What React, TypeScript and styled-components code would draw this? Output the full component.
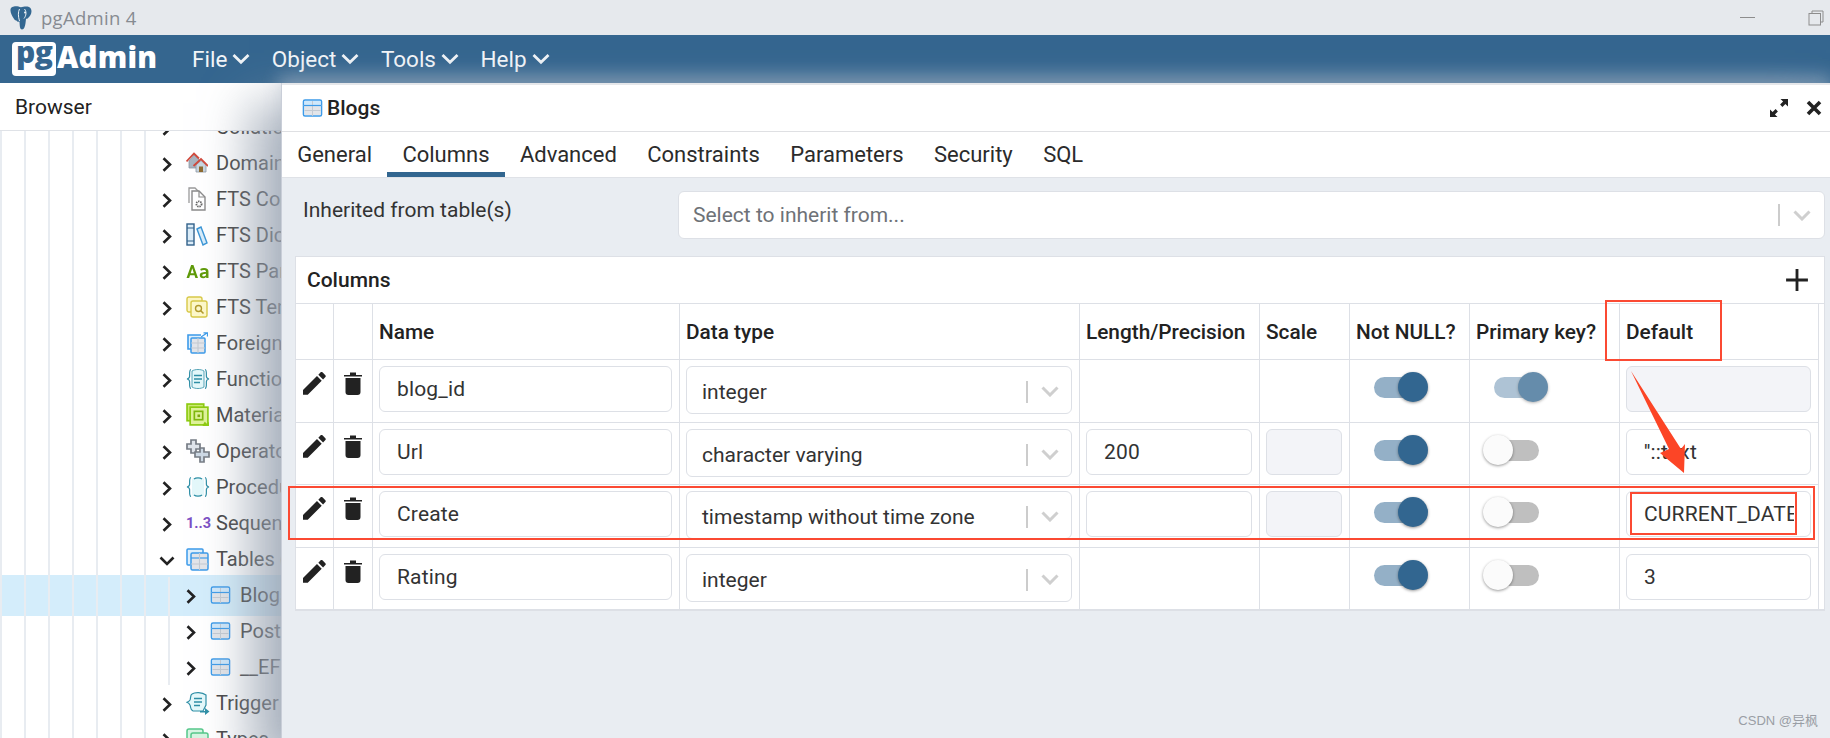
import React from 'react';
import styled, { createGlobalStyle } from 'styled-components';

const GlobalStyle = createGlobalStyle`
  html, body {
    margin: 0;
    padding: 0;
    background: #fff;
  }
  * {
    box-sizing: border-box;
  }
`;

const Chevron = ({ open }: { open?: boolean }) =>
  open ? (
    <svg width="16" height="10" viewBox="0 0 16 10">
      <path d="M1.5 1.5 L8 8 L14.5 1.5" fill="none" stroke="#222" strokeWidth="2.6" />
    </svg>
  ) : (
    <svg width="10" height="15" viewBox="0 0 10 15">
      <path d="M1.5 1.2 L8 7.5 L1.5 13.8" fill="none" stroke="#222" strokeWidth="2.6" />
    </svg>
  );

const NavChevron = () => (
  <svg width="18" height="12" viewBox="0 0 18 12">
    <path d="M1.5 2 L9 9.3 L16.5 2" fill="none" stroke="#fff" strokeWidth="2.8" opacity="0.92" />
  </svg>
);

const SelectChevron = () => (
  <svg width="18" height="11" viewBox="0 0 18 11">
    <path d="M1.5 1.5 L9 9 L16.5 1.5" fill="none" stroke="#cfcfcf" strokeWidth="3" />
  </svg>
);

const TableGlyph = () => (
  <svg width="21" height="18" viewBox="0 0 20 18">
    <rect x="1" y="1" width="18" height="16" rx="1.5" fill="#fff" stroke="#3d9be9" strokeWidth="1.6" />
    <rect x="2" y="2" width="16" height="4" fill="#cfe8fb" />
    <rect x="2" y="7" width="16" height="9" fill="#e3e5e9" />
    <path d="M1 6.5 H19 M10 2 V17 M2 11.5 H18" stroke="#c4cad2" strokeWidth="1" />
    <path d="M1 6.5 H19" stroke="#3d9be9" strokeWidth="1.2" />
  </svg>
);

const CollationIcon = () => (
  <svg width="22" height="24" viewBox="0 0 22 24">
    <path d="M1 2 H9 V13 H1 Z" fill="#fff" stroke="#ee6a6a" strokeWidth="2.4" />
    <path d="M12 5 H21 L16.5 11 Z" fill="#ee6a6a" />
  </svg>
);

const DomainIcon = () => (
  <svg width="22" height="22" viewBox="0 0 22 22">
    <path d="M3 9 L8 3 L14 9 V16 H3 Z" fill="#a9b4bf" stroke="#8d97a3" strokeWidth="0.8" />
    <path d="M0.5 9.5 L8 1.5 L13 6.5" fill="none" stroke="#d14a3c" strokeWidth="1.8" />
    <path d="M10 13 L15 8.5 L20 13 V20 H10 Z" fill="#c9d6e0" stroke="#8d97a3" strokeWidth="0.8" />
    <path d="M7.5 14 L15 7 L22 14" fill="none" stroke="#d14a3c" strokeWidth="1.8" />
    <rect x="13" y="14.5" width="4" height="5.5" fill="#8d6a2f" />
  </svg>
);

const ConfigIcon = () => (
  <svg width="22" height="26" viewBox="0 0 22 26">
    <path d="M3 17 V2 H9 L13 6" fill="#fff" stroke="#9b9b9b" strokeWidth="1.3" />
    <path d="M6 24 V5 H13 L19 11 V24 Z" fill="#fff" stroke="#8b8b8b" strokeWidth="1.4" />
    <path d="M13 5 V11 H19" fill="none" stroke="#8b8b8b" strokeWidth="1.2" />
    <circle cx="13" cy="18" r="2.6" fill="none" stroke="#666" strokeWidth="1.8" strokeDasharray="1.4 0.8" />
  </svg>
);

const DictIcon = () => (
  <svg width="22" height="24" viewBox="0 0 22 24">
    <rect x="1" y="1" width="7" height="21" fill="#dcedf8" stroke="#33628a" strokeWidth="1.4" />
    <path d="M1 5 H8 M1 18 H8" stroke="#33628a" strokeWidth="1" />
    <path d="M11 6 L15 4 L21 20 L17 22 Z" fill="#d8ecf9" stroke="#3b96d6" strokeWidth="1.4" />
  </svg>
);

const ParserIcon = () => (
  <svg width="24" height="18" viewBox="0 0 22 16">
    <path d="M0.5 14.5 L4.7 2.5 H6.8 L11 14.5 H8.6 L7.8 12 H3.7 L2.9 14.5 Z M4.3 10 H7.2 L5.75 5.4 Z" fill="#5f9a08" />
    <path d="M16.5 5.2 C19.4 5.2 20.6 6.4 20.6 8.5 V14.5 H18.6 L18.4 13.5 C17.7 14.3 16.8 14.7 15.7 14.7 C13.9 14.7 12.6 13.6 12.6 12 C12.6 10 14.4 9.1 18.3 9 V8.6 C18.3 7.6 17.7 7 16.4 7 C15.4 7 14.5 7.3 13.7 7.8 L13 6.2 C14 5.6 15.2 5.2 16.5 5.2 Z M18.3 10.5 C15.8 10.6 14.9 11.1 14.9 11.9 C14.9 12.6 15.4 13 16.2 13 C17.2 13 18.3 12.4 18.3 11.5 Z" fill="#5f9a08" />
  </svg>
);

const TemplateIcon = () => (
  <svg width="22" height="22" viewBox="0 0 22 22">
    <rect x="1" y="1" width="15" height="15" rx="2" fill="#fdf6c4" stroke="#d8c948" strokeWidth="1.4" />
    <rect x="5" y="5" width="16" height="16" rx="2" fill="#fdf8c9" stroke="#d8c948" strokeWidth="1.4" />
    <circle cx="12.5" cy="12.5" r="3" fill="none" stroke="#b29a2c" strokeWidth="1.4" />
    <path d="M14.8 14.8 L17.5 17.5" stroke="#b29a2c" strokeWidth="1.6" />
  </svg>
);

const ForeignIcon = () => (
  <svg width="22" height="22" viewBox="0 0 22 22">
    <path d="M15 3 H2 V17 H5" fill="#dff0fc" stroke="#3d9be9" strokeWidth="1.6" />
    <rect x="5" y="6" width="14" height="15" rx="1" fill="#e3e5e9" stroke="#3d9be9" strokeWidth="1.5" />
    <path d="M5 11 H19 M12 6 V21 M5 16 H19" stroke="#c4cad2" strokeWidth="1.1" />
    <path d="M15 5 L21 1 M17.5 0.8 H21.5 V4.5" fill="none" stroke="#3d9be9" strokeWidth="1.3" />
  </svg>
);

const FunctionIcon = () => (
  <svg width="24" height="22" viewBox="0 0 24 22">
    <path d="M6 3 C9 1 15 1 18 3 V19 C15 21 9 21 6 19 Z" fill="#e4f8fa" stroke="#2f8fa6" strokeWidth="0.8" />
    <path d="M5 1.5 C2.8 2 4 7 3.5 9 C3.2 10.2 2 10.8 1 11 C2 11.2 3.2 11.8 3.5 13 C4 15 2.8 20 5 20.5" fill="none" stroke="#2f8fa6" strokeWidth="1.2" />
    <path d="M19 1.5 C21.2 2 20 7 20.5 9 C20.8 10.2 22 10.8 23 11 C22 11.2 20.8 11.8 20.5 13 C20 15 21.2 20 19 20.5" fill="none" stroke="#2f8fa6" strokeWidth="1.2" />
    <path d="M8 7.5 H16 M8 11 H16 M8 14.5 H14" stroke="#2f8fa6" strokeWidth="1.5" />
  </svg>
);

const MaterialIcon = () => (
  <svg width="24" height="24" viewBox="0 0 23 23">
    <rect x="1" y="1" width="16" height="16" fill="#cdea72" stroke="#8dcb10" strokeWidth="1.6" />
    <rect x="4" y="4" width="17" height="17" fill="#dff29a" stroke="#8dcb10" strokeWidth="1.6" />
    <rect x="8" y="8" width="8" height="8" fill="none" stroke="#7fb80d" strokeWidth="1.6" />
    <rect x="11" y="11" width="2.5" height="2.5" fill="#7fa80d" />
    <path d="M16 21 L18 18 L20 20 L22 18 V22 H16 Z" fill="#8dcb10" />
  </svg>
);

const OperatorIcon = () => (
  <svg width="24" height="24" viewBox="0 0 24 24">
    <path d="M5 1 H10 V5 H14 V10 H10 V14 H5 V10 H1 V5 H5 Z" fill="#dfe4ea" stroke="#777d85" strokeWidth="1.7" />
    <path d="M14 9 H18 V13 H23 V18 H18 V23 H14 V18 H9 V13 H14 Z" fill="#cdd9e5" stroke="#777d85" strokeWidth="1.7" />
  </svg>
);

const ProcedureIcon = () => (
  <svg width="24" height="22" viewBox="0 0 24 22">
    <path d="M6 3 C9 1 15 1 18 3 V19 C15 21 9 21 6 19 Z" fill="#e4f8fa" />
    <path d="M5 1.5 C2.8 2 4 7 3.5 9 C3.2 10.2 2 10.8 1 11 C2 11.2 3.2 11.8 3.5 13 C4 15 2.8 20 5 20.5" fill="none" stroke="#2f8fa6" strokeWidth="1.2" />
    <path d="M19 1.5 C21.2 2 20 7 20.5 9 C20.8 10.2 22 10.8 23 11 C22 11.2 20.8 11.8 20.5 13 C20 15 21.2 20 19 20.5" fill="none" stroke="#2f8fa6" strokeWidth="1.2" />
    <path d="M8 3 C10 1.5 14 1.5 16 3" fill="none" stroke="#2f8fa6" strokeWidth="1.2" />
    <path d="M8 19 C10 20.5 14 20.5 16 19" fill="none" stroke="#2f8fa6" strokeWidth="1.2" />
  </svg>
);

const TablesIcon = () => (
  <svg width="23" height="23" viewBox="0 0 23 23">
    <path d="M4 17 H2 Q1 17 1 16 V2 Q1 1 2 1 H16 Q17 1 17 2 V5" fill="#dff0fc" stroke="#3d9be9" strokeWidth="1.5" />
    <rect x="5" y="5" width="17" height="17" rx="1.5" fill="#e3e5e9" stroke="#3d9be9" strokeWidth="1.5" />
    <path d="M5 10 H22" stroke="#3d9be9" strokeWidth="1.2" />
    <path d="M13.5 5 V22 M5 16 H22" stroke="#c4cad2" strokeWidth="1.1" />
  </svg>
);

const TriggerIcon = () => (
  <svg width="24" height="24" viewBox="0 0 24 24">
    <path d="M6 3 C4 4 5 7 4 9 C3.4 10 2 11 1 11.3 C2 11.7 3.4 12.7 4 14 C5 16 4 19 7 20 H17 L20 14 V4 C16 1 9 1 6 3 Z" fill="#e4f8fa" stroke="#2f8fa6" strokeWidth="1.2" />
    <path d="M8 7.5 H16 M8 11 H16 M8 14.5 H14" stroke="#2f8fa6" strokeWidth="1.5" />
    <path d="M14 20 H19 V17 L23.5 20.5 L19 24 V21.5 H14 Z" fill="#2f8fa6" />
  </svg>
);

const TypesIcon = () => (
  <svg width="23" height="22" viewBox="0 0 23 22">
    <rect x="1" y="1" width="16" height="14" rx="2" fill="#d6f5e2" stroke="#56c88a" strokeWidth="1.5" />
    <rect x="5" y="5" width="17" height="15" rx="2" fill="#d6f5e2" stroke="#56c88a" strokeWidth="1.5" />
  </svg>
);

const SequenceIcon = () => <SeqText>1..3</SeqText>;

const PencilIcon = () => (
  <svg width="23" height="23" viewBox="3 3 18.2 18.2">
    <path
      fill="#222"
      d="M3 17.25V21h3.75L17.81 9.94l-3.75-3.75L3 17.25zM20.71 7.04c.39-.39.39-1.02 0-1.41l-2.34-2.34c-.39-.39-1.02-.39-1.41 0l-1.83 1.83 3.75 3.75 1.83-1.83z"
    />
  </svg>
);

const TrashIcon = () => (
  <svg width="18" height="23" viewBox="0 0 18 23">
    <path d="M0 3 H18 V4.6 H0 Z M6 0.6 H12 V3 H6 Z" fill="#222" />
    <path d="M1.5 6 H16.5 V20 Q16.5 23 13.5 23 H4.5 Q1.5 23 1.5 20 Z" fill="#222" />
  </svg>
);

const ElephantIcon = () => (
  <svg width="22" height="24" viewBox="0 0 22 24">
    <path
      fill="#336791"
      d="M4 0.5 C7 0 9 1 11 1.2 C13 1 16 0 19 1 C22 2.5 22 6 20.5 9 C19.5 11 18 12 17.6 12.6 C16.8 13 16.4 12.8 16 13 C15.6 16 15.5 19 14.4 21.5 C13.6 23.6 11.4 24 10.4 22.4 C9.6 21 9.8 18 9.4 15.6 C8 16 7 15.4 6.4 14.4 C5.4 14.6 4.6 14 3.4 12 C1.6 9 -0.6 4.5 1 2 C1.6 1.1 2.8 0.7 4 0.5 Z"
    />
    <path d="M9.5 3 C8 6 8 10 9.5 15 M14.5 3 C17 6 16 10 14 12.5" fill="none" stroke="#fff" strokeWidth="0.9" />
    <circle cx="15" cy="6.5" r="0.9" fill="#fff" />
  </svg>
);

const ExpandIcon = () => (
  <svg width="20" height="20" viewBox="0 0 20 20">
    <path d="M11.5 1 H19 V8.5 L16.4 5.9 L13.4 8.9 L11.1 6.6 L14.1 3.6 Z" fill="#222" />
    <path d="M8.5 19 H1 V11.5 L3.6 14.1 L6.6 11.1 L8.9 13.4 L5.9 16.4 Z" fill="#222" />
  </svg>
);

const CloseIcon = () => (
  <svg width="16" height="16" viewBox="0 0 16 16">
    <path d="M2 2 L14 14 M14 2 L2 14" stroke="#222" strokeWidth="3.6" />
  </svg>
);

const PlusIcon = () => (
  <svg width="24" height="24" viewBox="0 0 22 22">
    <path d="M11 1 V21 M1 11 H21" stroke="#222" strokeWidth="2.6" />
  </svg>
);

const Annotations = () => (
  <AnnotationLayer viewBox="0 0 1830 738">
    <g fill="none" stroke="#fb4a33" strokeWidth="2">
      <rect x="1606" y="301" width="115" height="59" />
      <rect x="289" y="487" width="1525" height="52" />
      <rect x="1631" y="493" width="165" height="41" />
    </g>
    <polygon
      fill="#fc4526"
      points="1631,371 1681,449 1685,444 1684,473 1660,453 1669,449"
    />
  </AnnotationLayer>
);

const treeItems = [
  { label: 'Collations', icon: <CollationIcon /> },
  { label: 'Domains', icon: <DomainIcon /> },
  { label: 'FTS Configurations', icon: <ConfigIcon /> },
  { label: 'FTS Dictionaries', icon: <DictIcon /> },
  { label: 'FTS Parsers', icon: <ParserIcon /> },
  { label: 'FTS Templates', icon: <TemplateIcon /> },
  { label: 'Foreign Tables', icon: <ForeignIcon /> },
  { label: 'Functions', icon: <FunctionIcon /> },
  { label: 'Materialized Views', icon: <MaterialIcon /> },
  { label: 'Operators', icon: <OperatorIcon /> },
  { label: 'Procedures', icon: <ProcedureIcon /> },
  { label: 'Sequences', icon: <SequenceIcon /> },
];

const childTables = ['Blogs', 'Posts', '__EFMigrationsHistory'];

const tabs = ['General', 'Columns', 'Advanced', 'Constraints', 'Parameters', 'Security', 'SQL'];

const headers = ['', '', 'Name', 'Data type', 'Length/Precision', 'Scale', 'Not NULL?', 'Primary key?', 'Default'];

const columns = [
  { name: 'blog_id', type: 'integer', length: null, scale: null, pk: true, def: '', defOff: true, height: 63 },
  { name: 'Url', type: 'character varying', length: '200', scale: '', pk: false, def: "''::text", defOff: false, height: 62 },
  { name: 'Create', type: 'timestamp without time zone', length: '', scale: '', pk: false, def: 'CURRENT_DATE', defOff: false, height: 63 },
  { name: 'Rating', type: 'integer', length: null, scale: null, pk: false, def: '3', defOff: false, height: 62 },
];

const App = () => {
  return (
    <Page>
      <GlobalStyle />
      <TitleBar>
        <ElephantIcon />
        <AppName>pgAdmin 4</AppName>
        <WindowButtons>
          <MinimizeLine />
          <svg width="16" height="16" viewBox="0 0 16 16">
            <path d="M4 3.5 V1 H15 V12 H12.5" fill="none" stroke="#8d8d8d" strokeWidth="1" />
            <rect x="1" y="3.5" width="11.5" height="11.5" fill="none" stroke="#8d8d8d" strokeWidth="1" />
          </svg>
        </WindowButtons>
      </TitleBar>
      <NavBar>
        <Logo>
          <LogoBadge>pg</LogoBadge>
          <LogoText>Admin</LogoText>
        </Logo>
        <Menu>
          {['File', 'Object', 'Tools', 'Help'].map((m) => (
            <MenuItem key={m}>
              {m}
              <NavChevron />
            </MenuItem>
          ))}
        </Menu>
      </NavBar>
      <Main>
        <Browser>
          <BrowserHeader>Browser</BrowserHeader>
          <Tree>
            <TreeInner>
              {treeItems.map((item) => (
                <TreeRow key={item.label} $depth={0}>
                  <Toggle><Chevron /></Toggle>
                  <TreeIcon>{item.icon}</TreeIcon>
                  <TreeLabel>{item.label}</TreeLabel>
                </TreeRow>
              ))}
              <TreeRow $depth={0}>
                <Toggle $open><Chevron open /></Toggle>
                <TreeIcon><TablesIcon /></TreeIcon>
                <TreeLabel>Tables (3)</TreeLabel>
              </TreeRow>
              <TreeGroup>
                {childTables.map((t, i) => (
                  <TreeRow key={t} $depth={1} $selected={i === 0}>
                    <Toggle><Chevron /></Toggle>
                    <TreeIcon><TableGlyph /></TreeIcon>
                    <TreeLabel>{t}</TreeLabel>
                  </TreeRow>
                ))}
              </TreeGroup>
              <TreeRow $depth={0}>
                <Toggle><Chevron /></Toggle>
                <TreeIcon><TriggerIcon /></TreeIcon>
                <TreeLabel>Trigger Functions</TreeLabel>
              </TreeRow>
              <TreeRow $depth={0}>
                <Toggle><Chevron /></Toggle>
                <TreeIcon><TypesIcon /></TreeIcon>
                <TreeLabel>Types</TreeLabel>
              </TreeRow>
            </TreeInner>
          </Tree>
        </Browser>
        <Dialog>
          <DialogHeader>
            <TableGlyph />
            <DialogTitle>Blogs</DialogTitle>
            <DialogActions>
              <ExpandIcon />
              <CloseIcon />
            </DialogActions>
          </DialogHeader>
          <Tabs>
            {tabs.map((t) => (
              <Tab key={t} $active={t === 'Columns'}>{t}</Tab>
            ))}
          </Tabs>
          <DialogBody>
            <InheritRow>
              <InheritLabel>Inherited from table(s)</InheritLabel>
              <InheritSelect>
                <Placeholder>Select to inherit from...</Placeholder>
                <SelectSeparator />
                <SelectChevron />
              </InheritSelect>
            </InheritRow>
            <ColumnsPanel>
              <PanelHeader>
                <PanelTitle>Columns</PanelTitle>
                <PlusIcon />
              </PanelHeader>
              <GridRow $height={56}>
                {headers.map((h, i) => (
                  <HeadCell key={i}>{h}</HeadCell>
                ))}
              </GridRow>
              {columns.map((c) => (
                <GridRow key={c.name} $height={c.height}>
                  <IconCell><PencilIcon /></IconCell>
                  <IconCell $trash><TrashIcon /></IconCell>
                  <Cell><Field><FieldText>{c.name}</FieldText></Field></Cell>
                  <Cell>
                    <TypeSelect>
                      <TypeText>{c.type}</TypeText>
                      <SelectSeparator />
                      <SelectChevron />
                    </TypeSelect>
                  </Cell>
                  <Cell>
                    {c.length !== null && <Field><FieldText>{c.length}</FieldText></Field>}
                  </Cell>
                  <Cell>
                    {c.scale !== null && <Field $disabled />}
                  </Cell>
                  <SwitchCell>
                    <Switch $on><Thumb $on /></Switch>
                  </SwitchCell>
                  <SwitchCell>
                    <Switch $on={c.pk} $faded={c.pk}><Thumb $on={c.pk} /></Switch>
                  </SwitchCell>
                  <Cell>
                    <Field $disabled={c.defOff}>
                      <FieldText>{c.def}</FieldText>
                    </Field>
                  </Cell>
                </GridRow>
              ))}
            </ColumnsPanel>
          </DialogBody>
        </Dialog>
      </Main>
      <Annotations />
      <Watermark>CSDN @异枫</Watermark>
    </Page>
  );
};

export default App;

const Page = styled.div`
  position: relative;
  width: 1830px;
  height: 738px;
  overflow: hidden;
  display: flex;
  flex-direction: column;
  font-family: Roboto, "Liberation Sans", sans-serif;
  color: #222;
`;

const TitleBar = styled.div`
  position: relative;
  z-index: 3;
  height: 35px;
  flex: none;
  display: flex;
  align-items: center;
  padding: 0 6px 0 10px;
  background: #e6e9ed;
`;

const AppName = styled.span`
  margin-left: 9px;
  font-family: "Open Sans", sans-serif;
  font-size: 18.5px;
  color: #868b91;
  letter-spacing: 0.3px;
`;

const WindowButtons = styled.div`
  margin-left: auto;
  display: flex;
  align-items: center;
  gap: 53px;
`;

const MinimizeLine = styled.div`
  width: 15px;
  height: 1px;
  background: #8d8d8d;
`;

const NavBar = styled.div`
  height: 48px;
  flex: none;
  display: flex;
  align-items: center;
  padding-left: 12px;
  background: #35668f;
`;

const Logo = styled.div`
  display: flex;
  align-items: center;
  width: 180px;
`;

const LogoBadge = styled.div`
  width: 44px;
  height: 34px;
  padding-left: 4px;
  background: #fff;
  border-radius: 4px;
  color: #35668f;
  font-family: "Open Sans", sans-serif;
  font-weight: 800;
  font-size: 30px;
  line-height: 19px;
  letter-spacing: -0.5px;
`;

const LogoText = styled.div`
  padding: 0 0 5px 1px;
  color: #fff;
  font-family: "Open Sans", sans-serif;
  font-weight: 800;
  font-size: 29.5px;
  line-height: 29px;
  letter-spacing: 0.2px;
`;

const Menu = styled.div`
  display: flex;
  align-items: center;
  gap: 21.5px;
`;

const MenuItem = styled.div`
  display: flex;
  align-items: center;
  gap: 5px;
  color: #f2f5f8;
  font-size: 22.5px;
`;

const Main = styled.div`
  flex: 1;
  min-height: 0;
  display: flex;
`;

const Browser = styled.div`
  width: 281px;
  flex: none;
  display: flex;
  flex-direction: column;
  background: #fff;
  overflow: hidden;
`;

const BrowserHeader = styled.div`
  height: 48px;
  flex: none;
  display: flex;
  align-items: center;
  padding-left: 15px;
  font-size: 21px;
  white-space: nowrap;
  border-bottom: 1px solid #dfe2e7;
`;

const Tree = styled.div`
  position: relative;
  flex: 1;
  overflow: hidden;

  &::after {
    content: '';
    position: absolute;
    top: 0;
    bottom: 0;
    left: 0;
    width: 147px;
    background: linear-gradient(to right, #e8ecf1 2px, transparent 2px) 0 0 / 24px 100%;
    pointer-events: none;
  }
`;

const TreeInner = styled.div`
  margin-top: -22px;
`;

const TreeGroup = styled.div`
  position: relative;

  &::before {
    content: '';
    position: absolute;
    z-index: 1;
    left: 168px;
    top: 0;
    width: 2px;
    height: 108px;
    background: #e8ecf1;
  }
`;

const TreeRow = styled.div<{ $depth: number; $selected?: boolean }>`
  position: relative;
  height: 36px;
  display: flex;
  align-items: center;
  padding-left: ${(p) => 162 + p.$depth * 24}px;
  white-space: nowrap;
  background: ${(p) => (p.$selected ? '#d4edfb' : 'transparent')};
  box-shadow: ${(p) => (p.$selected ? '0 -2px 0 #d4edfb, 0 3px 0 #d4edfb' : 'none')};
`;

const Toggle = styled.div<{ $open?: boolean }>`
  width: ${(p) => (p.$open ? '27px' : '24px')};
  flex: none;
  display: flex;
  align-items: center;
  margin-left: ${(p) => (p.$open ? '-3px' : '0')};
  padding-top: 3px;
`;

const TreeIcon = styled.div`
  width: 30px;
  flex: none;
  display: flex;
  align-items: center;
`;

const TreeLabel = styled.span`
  font-size: 20px;
  color: #444;
`;

const SeqText = styled.span`
  font-size: 14.5px;
  font-weight: 700;
  color: #7b4fc4;
`;

const Dialog = styled.div`
  position: relative;
  z-index: 2;
  flex: 1;
  min-width: 0;
  display: flex;
  flex-direction: column;
  background: #e9edf2;
  border-left: 1px solid #c9ced8;
  box-shadow: -26px 26px 44px 6px rgba(150, 160, 175, 0.75), 0 -6px 16px 2px rgba(190, 200, 212, 0.45);
`;

const DialogHeader = styled.div`
  height: 49px;
  flex: none;
  display: flex;
  align-items: center;
  padding-left: 20px;
  background: #fff;
  border-top: 2px solid #e5e7ea;
  border-bottom: 1px solid #dfe0e3;
`;

const DialogTitle = styled.span`
  margin-left: 4px;
  font-size: 21px;
  font-weight: 500;
`;

const DialogActions = styled.div`
  margin-left: auto;
  display: flex;
  align-items: center;
  gap: 17px;
  padding-right: 8px;
`;

const Tabs = styled.div`
  height: 46px;
  flex: none;
  display: flex;
  background: #fff;
  border-bottom: 1px solid #dfe2e7;
`;

const Tab = styled.div<{ $active?: boolean }>`
  display: flex;
  align-items: center;
  padding: 0 15.2px;
  font-size: 22px;
  color: #2b2b2b;
  border-bottom: 5px solid ${(p) => (p.$active ? '#326690' : 'transparent')};
  border-top: 5px solid transparent;
`;

const DialogBody = styled.div`
  flex: 1;
  padding: 13px 5px 0 13px;
`;

const InheritRow = styled.div`
  display: flex;
  height: 48px;
`;

const InheritLabel = styled.div`
  width: 383px;
  padding: 7px 0 0 8px;
  font-size: 21px;
  color: #333;
`;

const InheritSelect = styled.div`
  flex: 1;
  display: flex;
  align-items: center;
  padding: 0 13px 0 14px;
  background: #fff;
  border: 1px solid #dde0e6;
  border-radius: 6px;
`;

const Placeholder = styled.span`
  font-size: 21px;
  color: #6e7277;
`;

const SelectSeparator = styled.div`
  margin-left: auto;
  margin-right: 13px;
  width: 2px;
  height: 22px;
  background: #cccccc;
`;

const ColumnsPanel = styled.div`
  margin-top: 17px;
  height: 355px;
  background: #fff;
  border: 1px solid #dde0e6;
  border-width: 1px 1px 2px 1px;
`;

const PanelHeader = styled.div`
  height: 47px;
  display: flex;
  align-items: center;
  justify-content: space-between;
  padding: 0 15px 0 11px;
  border-bottom: 1px solid #dde0e6;
`;

const PanelTitle = styled.span`
  font-size: 21px;
  font-weight: 500;
`;

const GridRow = styled.div<{ $height: number }>`
  display: grid;
  grid-template-columns: 38px 39px 307px 400px 180px 90px 120px 150px 199px;
  height: ${(p) => p.$height}px;
  width: 1523px;
  border-bottom: 1px solid #dde0e6;
`;

const Cell = styled.div`
  padding: 6px 7px 0 6px;
  border-right: 1px solid #dde0e6;
  min-width: 0;
`;

const HeadCell = styled.div`
  display: flex;
  align-items: center;
  padding: 1px 6px 0;
  font-size: 20.8px;
  font-weight: 500;
  white-space: nowrap;
  color: #222;
  border-right: 1px solid #dde0e6;
`;

const IconCell = styled.div<{ $trash?: boolean }>`
  display: flex;
  justify-content: ${(p) => (p.$trash ? 'center' : 'flex-start')};
  align-items: flex-start;
  padding: 12px 0 0 ${(p) => (p.$trash ? '0' : '7px')};
  border-right: 1px solid #dde0e6;
`;

const Field = styled.div<{ $disabled?: boolean }>`
  height: 46px;
  display: flex;
  align-items: center;
  padding: 0 16px 0 17px;
  background: ${(p) => (p.$disabled ? '#f3f4f8' : '#fff')};
  border: 1px solid #dde0e6;
  border-radius: 6px;
`;

const FieldText = styled.div`
  overflow: hidden;
  white-space: nowrap;
  font-size: 21px;
  letter-spacing: 0.15px;
  color: #333;
`;

const TypeSelect = styled.div`
  height: 48px;
  display: flex;
  align-items: center;
  padding: 3px 12px 0 15px;
  background: #fff;
  border: 1px solid #dde0e6;
  border-radius: 6px;
`;

const TypeText = styled.span`
  font-size: 21px;
  color: #333;
`;

const SwitchCell = styled.div`
  position: relative;
  border-right: 1px solid #dde0e6;
`;

const Switch = styled.div<{ $on?: boolean; $faded?: boolean }>`
  position: relative;
  width: 50px;
  height: 21px;
  margin: 17px 0 0 ${(p) => (p.$on ? '24px' : '19px')};
  border-radius: 11px;
  background: ${(p) => (p.$on ? '#94b0c7' : '#bfbfbf')};
  opacity: ${(p) => (p.$faded ? 0.75 : 1)};
`;

const Thumb = styled.div<{ $on?: boolean }>`
  position: absolute;
  top: -5px;
  ${(p) => (p.$on ? 'right: -4px;' : 'left: -6px;')}
  width: 30px;
  height: 30px;
  border-radius: 50%;
  background: ${(p) => (p.$on ? '#326690' : '#fbfbfb')};
  box-shadow: 0 1px 3px rgba(0, 0, 0, 0.4);
`;

const AnnotationLayer = styled.svg`
  position: absolute;
  z-index: 4;
  top: 0;
  left: 0;
  width: 1830px;
  height: 738px;
  pointer-events: none;
`;

const Watermark = styled.div`
  position: absolute;
  z-index: 5;
  right: 12px;
  bottom: 9px;
  font-family: "Liberation Sans", "Noto Sans CJK SC", sans-serif;
  font-size: 13px;
  color: #9a9ea5;
`;
